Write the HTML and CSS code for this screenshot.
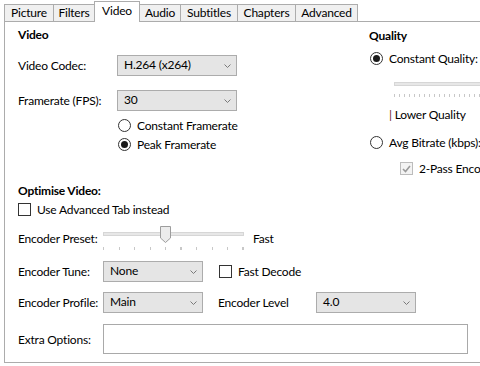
FILE: index.html
```html
<!DOCTYPE html>
<html lang="en">
<head>
    <meta charset="UTF-8">
    <title>Video settings</title>
    <link rel="stylesheet" href="styles.css">
</head>
<body>
    <div class="tabs">
        <div class="tab tab-picture">Picture</div>
        <div class="tab tab-filters">Filters</div>
        <div class="tab tab-video active">Video</div>
        <div class="tab tab-audio">Audio</div>
        <div class="tab tab-subtitles">Subtitles</div>
        <div class="tab tab-chapters">Chapters</div>
        <div class="tab tab-advanced">Advanced</div>
    </div>

    <div class="panel">
        <div class="top">
            <section class="video-group">
                <h2 class="group-title">Video</h2>
                <div class="row codec-row">
                    <span class="lbl lbl-wide">Video Codec:</span>
                    <div class="combo combo-wide">
                        <span>H.264 (x264)</span>
                        <svg class="chev" width="7" height="4" viewBox="0 0 7 4"><polyline points="0.5,0.5 3.5,3.5 6.5,0.5" fill="none" stroke="#7a7a7a"/></svg>
                    </div>
                </div>
                <div class="row fps-row">
                    <span class="lbl lbl-wide">Framerate (FPS):</span>
                    <div class="combo combo-wide">
                        <span>30</span>
                        <svg class="chev" width="7" height="4" viewBox="0 0 7 4"><polyline points="0.5,0.5 3.5,3.5 6.5,0.5" fill="none" stroke="#7a7a7a"/></svg>
                    </div>
                </div>
                <div class="fps-modes">
                    <div class="opt"><span class="radio"></span>Constant Framerate</div>
                    <div class="opt"><span class="radio checked"></span>Peak Framerate</div>
                </div>
            </section>

            <section class="quality-group">
                <h2 class="group-title">Quality</h2>
                <div class="opt cq-opt"><span class="radio checked"></span>Constant Quality:</div>
                <div class="q-slider">
                    <div class="track"></div>
                    <div class="ticks dense"></div>
                </div>
                <div class="lower-q"><span class="bar">|</span> Lower Quality</div>
                <div class="opt abr-opt"><span class="radio"></span>Avg Bitrate (kbps):</div>
                <div class="opt twopass"><span class="check disabled checked"><svg width="9" height="8" viewBox="0 0 9 8"><polyline points="1,4 3.5,6.5 8,1" fill="none" stroke="#9a9a9a" stroke-width="1.6"/></svg></span>2-Pass Encoding</div>
            </section>
        </div>

        <section class="optimise">
            <h2 class="group-title">Optimise Video:</h2>
            <div class="opt adv-opt"><span class="check"></span>Use Advanced Tab instead</div>

            <div class="row preset-row">
                <span class="lbl">Encoder Preset:</span>
                <div class="slider">
                    <div class="track"></div>
                    <svg class="thumb" width="11" height="17" viewBox="0 0 11 17"><polygon points="0.5,0.5 10.5,0.5 10.5,12 5.5,16.5 0.5,12" fill="#ececec" stroke="#9d9d9d"/></svg>
                    <div class="ticks sparse"></div>
                </div>
                <span class="fast">Fast</span>
            </div>

            <div class="row tune-row">
                <span class="lbl">Encoder Tune:</span>
                <div class="combo">
                    <span>None</span>
                    <svg class="chev" width="7" height="4" viewBox="0 0 7 4"><polyline points="0.5,0.5 3.5,3.5 6.5,0.5" fill="none" stroke="#7a7a7a"/></svg>
                </div>
                <div class="opt fast-decode"><span class="check"></span>Fast Decode</div>
            </div>

            <div class="row profile-row">
                <span class="lbl">Encoder Profile:</span>
                <div class="combo">
                    <span>Main</span>
                    <svg class="chev" width="7" height="4" viewBox="0 0 7 4"><polyline points="0.5,0.5 3.5,3.5 6.5,0.5" fill="none" stroke="#7a7a7a"/></svg>
                </div>
                <span class="level-lbl">Encoder Level</span>
                <div class="combo">
                    <span>4.0</span>
                    <svg class="chev" width="7" height="4" viewBox="0 0 7 4"><polyline points="0.5,0.5 3.5,3.5 6.5,0.5" fill="none" stroke="#7a7a7a"/></svg>
                </div>
            </div>

            <div class="row extra-row">
                <span class="lbl">Extra Options:</span>
                <div class="textbox"></div>
            </div>
        </section>
    </div>
</body>
</html>
```

FILE: styles.css
```css
body { margin: 0; width: 480px; height: 366px; overflow: hidden; background: #fff; color: #000; font: 12px Lato, "Noto Sans", sans-serif; letter-spacing: -0.2px; }

/* tab strip */
.tabs { display: flex; align-items: flex-end; height: 21px; padding-left: 4px; }
.tab { box-sizing: border-box; height: 17px; margin-left: -1px; border: 1px solid #acacac; border-bottom: 0; background: #f0f0f0; text-align: center; line-height: 16px; white-space: nowrap; }
.tab-picture { width: 50px; margin-left: 0; }
.tab-filters { width: 42px; }
.tab-video { width: 46px; }
.tab-audio { width: 42px; }
.tab-subtitles { width: 58px; }
.tab-chapters { width: 59px; }
.tab-advanced { width: 63px; }
.tab.active { height: 21px; margin-bottom: -1px; padding-top: 1px; background: #fff; position: relative; z-index: 1; }

.panel { box-sizing: border-box; width: 520px; height: 342px; margin-left: 4px; padding: 5px 0 0 13px; border: 1px solid #acacac; }

.group-title { margin: 0; font-size: 12px; font-weight: bold; line-height: 16px; white-space: nowrap; }

.row { display: flex; align-items: center; }
.lbl { width: 85px; flex: none; white-space: nowrap; }
.lbl-wide { width: 99px; }

.combo { box-sizing: border-box; width: 100px; height: 21px; flex: none; display: flex; align-items: center; justify-content: space-between; padding: 0 5px 2px 6px; border: 1px solid #acacac; background: #e5e5e5; white-space: nowrap; }
.combo-wide { width: 120px; }
.chev { flex: none; margin-top: 2px; }

.opt { display: flex; align-items: center; height: 19px; white-space: nowrap; }
.radio { box-sizing: border-box; width: 13px; height: 13px; margin-right: 6px; border: 1px solid #333; border-radius: 50%; background: #fff; display: flex; align-items: center; justify-content: center; flex: none; }
.radio.checked::after { content: ""; width: 7px; height: 7px; border-radius: 50%; background: #1a1a1a; }
.check { box-sizing: border-box; width: 13px; height: 13px; margin-right: 6px; border: 1px solid #333; background: #fff; display: flex; align-items: center; justify-content: center; flex: none; }
.check.disabled { border-color: #bcbcbc; background: #f3f3f3; }

/* top area: two groups side by side */
.top { display: flex; height: 156px; }
.video-group { width: 351px; flex: none; }
.codec-row { margin-top: 12px; }
.fps-row { margin-top: 14px; }
.fps-modes { margin: 5px 0 0 100px; }

.quality-group { padding-top: 1px; }
.cq-opt { margin-top: 5px; margin-left: 1px; }
.q-slider { margin: 14px 0 0 25px; }
.track { box-sizing: border-box; height: 4px; border: 1px solid #d6d6d6; background: #e7e7e7; }
.ticks { height: 3px; }
.ticks.dense { margin-top: 8px; width: 200px; background: repeating-linear-gradient(to right, #c8c8c8 0 1px, transparent 1px 5px); }
.lower-q { margin: 10px 0 0 20px; line-height: 16px; white-space: nowrap; }
.lower-q .bar { color: #6b1f2a; }
.abr-opt { margin-top: 10px; margin-left: 1px; }
.twopass { margin: 7px 0 0 31px; }

/* optimise area */
.adv-opt { margin-top: 1px; }
.preset-row { align-items: flex-start; margin-top: 7px; height: 25px; }
.preset-row .lbl { margin-top: 5px; line-height: 16px; }
.slider { position: relative; width: 141px; height: 25px; flex: none; }
.slider .track { margin-top: 6px; }
.slider .thumb { position: absolute; left: 57px; top: 0; }
.ticks.sparse { margin-top: 11px; background: repeating-linear-gradient(to right, #c8c8c8 0 1px, transparent 1px 15.5px); }
.fast { margin: 5px 0 0 9px; line-height: 16px; }

.tune-row { margin-top: 10px; }
.fast-decode { margin-left: 16px; }
.profile-row { margin-top: 10px; }
.level-lbl { width: 98px; margin-left: 15px; flex: none; white-space: nowrap; }
.extra-row { margin-top: 11px; }
.textbox { box-sizing: border-box; width: 365px; height: 30px; border: 1px solid #a9a9a9; background: #fff; }
```
